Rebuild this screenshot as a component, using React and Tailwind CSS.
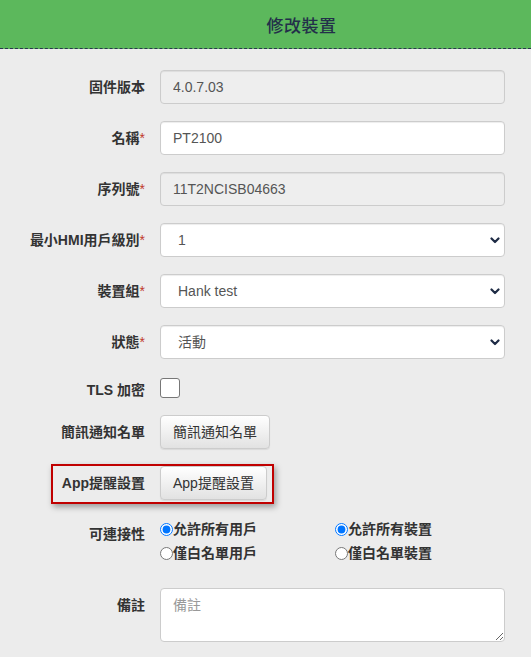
import React from "react";

const FONT = { fontFamily: '"Liberation Sans", "Noto Sans CJK TC", sans-serif' };

function Label({ children, req }) {
  return (
    <div className="w-[145px] shrink-0 text-right pt-[7px] leading-[20px] text-[14px] font-bold text-[#333]">
      {children}
      {req && <span className="font-normal text-[#c0392b]">*</span>}
    </div>
  );
}

function Chevron() {
  return (
    <svg
      className="absolute right-[5px] top-[14px] pointer-events-none"
      width="10"
      height="7"
      viewBox="0 0 10 7"
    >
      <path d="M1.5 1.5 L5 5 L8.5 1.5" fill="none" stroke="#1e2b45" strokeWidth="2.2" strokeLinecap="round" strokeLinejoin="round" />
    </svg>
  );
}

function TextInput({ value, disabled }) {
  return (
    <input
      readOnly
      value={value}
      className={`w-[345px] h-[34px] rounded-[4px] border border-[#ccc] px-[12px] text-[14px] text-[#555] outline-none shadow-[inset_0_1px_1px_rgba(0,0,0,0.075)] ${
        disabled ? "bg-[#eee]" : "bg-white"
      }`}
      style={FONT}
    />
  );
}

function Select({ value }) {
  return (
    <div className="relative w-[345px] h-[34px]">
      <div className="w-full h-full rounded-[4px] border border-[#ccc] bg-white pl-[17px] flex items-center text-[14px] text-[#555] shadow-[inset_0_1px_1px_rgba(0,0,0,0.075)]">
        {value}
      </div>
      <Chevron />
    </div>
  );
}

function Btn({ children }) {
  return (
    <button
      className="h-[34px] px-[12px] rounded-[4px] border border-[#ccc] bg-gradient-to-b from-white to-[#e2e2e2] text-[14px] text-[#333] shadow-[0_1px_1px_rgba(0,0,0,0.08)]"
      style={FONT}
    >
      {children}
    </button>
  );
}

function Radio({ checked, name, children }) {
  return (
    <label className="flex items-center h-[24px] text-[14px] font-bold text-[#333]">
      <input
        type="radio"
        name={name}
        defaultChecked={checked}
        className="m-0 w-[13px] h-[13px] shrink-0"
      />
      <span>{children}</span>
    </label>
  );
}

export default function App() {
  return (
    <div className="min-h-[657px] bg-[#ececec]" style={FONT}>
      <div className="h-[49px] bg-[#5cb85c] border-b border-dashed border-[#2a3550] flex items-center justify-center pl-[72px] pt-[6px]">
        <span className="text-[17px] font-medium text-[#23304a] tracking-[0.5px]">修改裝置</span>
      </div>

      <div className="flex flex-col gap-[17px] pt-[21px]">
        <div className="flex gap-[15px]">
          <Label>固件版本</Label>
          <TextInput value="4.0.7.03" disabled />
        </div>
        <div className="flex gap-[15px]">
          <Label req>名稱</Label>
          <TextInput value="PT2100" />
        </div>
        <div className="flex gap-[15px]">
          <Label req>序列號</Label>
          <TextInput value="11T2NCISB04663" disabled />
        </div>
        <div className="flex gap-[15px]">
          <Label req>最小HMI用戶級別</Label>
          <Select value="1" />
        </div>
        <div className="flex gap-[15px]">
          <Label req>裝置組</Label>
          <Select value="Hank test" />
        </div>
        <div className="flex gap-[15px]">
          <Label req>狀態</Label>
          <Select value="活動" />
        </div>
        <div className="flex gap-[15px] h-[22px]">
          <div className="w-[145px] shrink-0 text-right h-[22px] leading-[28px] text-[14px] font-bold text-[#333]">
            TLS 加密
          </div>
          <div className="pt-[2px]">
            <div className="w-[20px] h-[20px] rounded-[3px] border-[1.5px] border-[#777] bg-white" />
          </div>
        </div>
        <div className="flex gap-[15px]">
          <Label>簡訊通知名單</Label>
          <Btn>簡訊通知名單</Btn>
        </div>
        <div className="relative flex gap-[15px]">
          <Label>App提醒設置</Label>
          <Btn>App提醒設置</Btn>
          <div className="absolute left-[51px] top-[-2px] w-[223px] h-[40px] border-2 border-[#c00000] shadow-[2px_3px_6px_rgba(0,0,0,0.35)] pointer-events-none" />
        </div>
        <div className="flex gap-[15px] mb-[6px]">
          <div className="w-[145px] shrink-0 text-right pt-[7px] leading-[20px] text-[14px] font-bold text-[#333]">
            可連接性
          </div>
          <div className="grid grid-cols-[175px_170px]">
            <Radio name="u" checked>允許所有用戶</Radio>
            <Radio name="d" checked>允許所有裝置</Radio>
            <Radio name="u">僅白名單用戶</Radio>
            <Radio name="d">僅白名單裝置</Radio>
          </div>
        </div>
        <div className="flex gap-[15px]">
          <Label>備註</Label>
          <textarea
            placeholder="備註"
            className="w-[345px] h-[54px] rounded-[4px] border border-[#ccc] bg-white px-[12px] py-[6px] leading-[20px] text-[14px] text-[#555] placeholder:text-[#999] outline-none"
            style={FONT}
          />
        </div>
      </div>
    </div>
  );
}
